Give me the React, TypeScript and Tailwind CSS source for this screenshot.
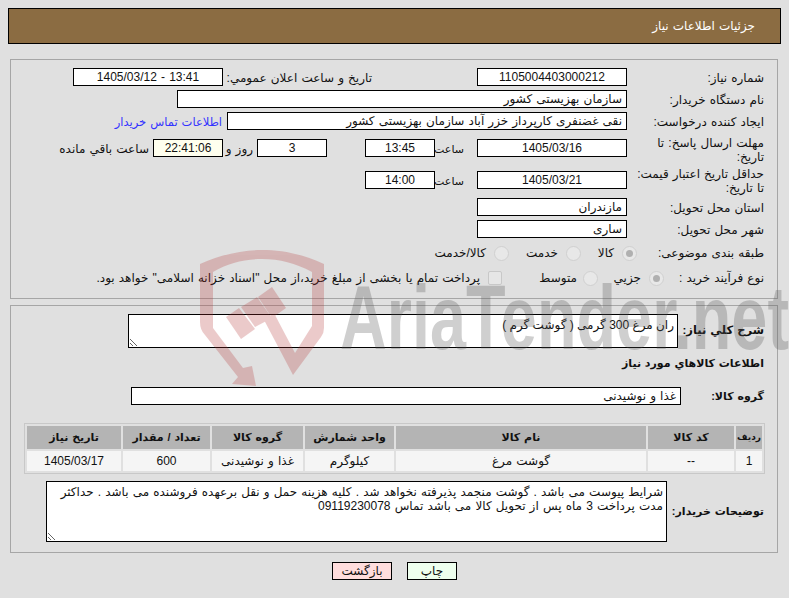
/**
 * Need details page
 */

import React from 'react';

const Field: React.FC<{ className?: string; children?: React.ReactNode }> = ({ className = '', children }) => (
  <div className={`h-[18px] border border-black bg-white leading-[17px] whitespace-nowrap overflow-hidden ${className}`}>
    {children}
  </div>
);

const Radio: React.FC<{ checked?: boolean; className?: string }> = ({ checked, className = '' }) => (
  <span className={`w-[15px] h-[15px] shrink-0 rounded-full border border-[#d0d0d0] bg-[#e8e8e8] flex items-center justify-center ${className}`}>
    {checked && <span className="w-[7px] h-[7px] rounded-full bg-[#b0b0b0]" />}
  </span>
);

const Watermark: React.FC = () => (
  <svg dir="ltr" className="absolute left-0 top-0 pointer-events-none" width="789" height="598" viewBox="0 0 789 598">
    <g fill="#b43232" opacity="0.25">
      <path d="M200 264 C225 253 245 250 262 250 C280 250 300 253 324 264 L324 328 Q324 333 321 337 L293 375 L263 318 L275 315 L295 353 L312 326 L312 272 C295 263 280 259 262 259 C245 259 228 263 213 272 L213 328 L243 368 L252 366 L256 386 L232 384 L238 377 L205 335 Q200 330 200 322 Z" />
      <polygon points="226,317 239,308 255,329 241,339" />
      <polygon points="241,307 257,297 272,318 255,327" />
      <polygon points="258,297 272,287 286,308 272,318" />
    </g>
    <text
      x="340"
      y="349"
      direction="ltr"
      fontFamily="'Liberation Sans', sans-serif"
      fontWeight="700"
      fontSize="90"
      fill="#555555"
      opacity="0.28"
      textLength="449"
      lengthAdjust="spacingAndGlyphs"
    >
      AriaTender.net
    </text>
  </svg>
);

const headers = [
  { title: 'ردیف', width: 'w-[26px]' },
  { title: 'کد کالا', width: 'w-[86px]' },
  { title: 'نام کالا', width: 'w-[250px]' },
  { title: 'واحد شمارش', width: 'w-[89px]' },
  { title: 'گروه کالا', width: 'w-[91px]' },
  { title: 'تعداد / مقدار', width: 'w-[87px]' },
  { title: 'تاریخ نیاز', width: 'w-[94px]' },
];

const row = ['1', '--', 'گوشت مرغ', 'کیلوگرم', 'غذا و نوشیدنی', '600', '1405/03/17'];

export default function App() {
  return (
    <div
      dir="rtl"
      className="relative w-[789px] h-[598px] overflow-hidden bg-[#e0e0e0] text-[12px] text-[#111] [word-spacing:0.8px] font-['Liberation_Sans','DejaVu_Sans',sans-serif]"
    >
      <div className="pt-2 px-2">
        {/* Page header */}
        <div className="h-9 border border-black bg-[#8b6c42] pr-[25px] text-white leading-[35px]">
          جزئیات اطلاعات نیاز
        </div>
      </div>

      {/* Main fields */}
      <div className="ml-[10px] mr-[11px] mt-[15px] h-[240px] border border-[#a6a6a6] pt-2 pr-[13px]">
        <div className="flex h-[18px]">
          <div className="w-[137px] leading-[20px]">شماره نیاز:</div>
          <Field className="w-[150px] text-center">1105004403000212</Field>
          <div className="w-[105px]" />
          <div className="w-[149px] leading-[20px]">تاریخ و ساعت اعلان عمومي:</div>
          <Field className="w-[150px] text-center"><span dir="ltr">1405/03/12 - 13:41</span></Field>
        </div>

        <div className="flex h-[18px] mt-1">
          <div className="w-[137px] leading-[20px]">نام دستگاه خریدار:</div>
          <Field className="w-[450px] px-1">سازمان بهزیستی کشور</Field>
        </div>

        <div className="flex h-[18px] mt-1">
          <div className="w-[137px] leading-[20px]">ایجاد کننده درخواست:</div>
          <Field className="w-[400px] px-1">نقی غضنفری کارپرداز خزر آباد سازمان بهزیستی کشور</Field>
          <a className="mr-[5px] leading-[20px] text-[11.5px] text-[#3333ff]">اطلاعات تماس خریدار</a>
        </div>

        <div className="flex h-[30px] mt-1.5">
          <div className="w-[137px] leading-[14px]">مهلت ارسال پاسخ: تا<br />تاریخ:</div>
          <div className="flex items-start pt-[3px]">
            <Field className="w-[150px] text-center">1405/03/16</Field>
            <div className="w-[42px] pr-[13px] text-[11px] leading-[20px] whitespace-nowrap">ساعت</div>
            <Field className="w-[70px] text-center">13:45</Field>
            <div className="w-[38px]" />
            <Field className="w-[70px] text-center">3</Field>
            <div className="w-[34px] pr-1 leading-[20px] whitespace-nowrap">روز و</div>
            <Field className="w-[70px] text-center !bg-[#ffffee]">22:41:06</Field>
            <div className="pr-1 leading-[20px] whitespace-nowrap">ساعت باقي مانده</div>
          </div>
        </div>

        <div className="flex h-[30px] mt-px">
          <div className="w-[137px] leading-[14px]">حداقل تاریخ اعتبار قیمت:<br />تا تاریخ:</div>
          <div className="flex items-start pt-1">
            <Field className="w-[150px] text-center">1405/03/21</Field>
            <div className="w-[42px] pr-[13px] text-[11px] leading-[20px] whitespace-nowrap">ساعت</div>
            <Field className="w-[70px] text-center">14:00</Field>
          </div>
        </div>

        <div className="flex h-[18px] mt-px">
          <div className="w-[137px] leading-[20px]">استان محل تحویل:</div>
          <Field className="w-[150px] px-1">مازندران</Field>
        </div>

        <div className="flex h-[18px] mt-1">
          <div className="w-[137px] leading-[20px]">شهر محل تحویل:</div>
          <Field className="w-[150px] px-1">ساری</Field>
        </div>

        <div className="flex items-center h-[18px] mt-[6px]">
          <div className="w-[127px] leading-[18px]">طبقه بندی موضوعی:</div>
          <Radio checked />
          <div className="w-[26px] pr-2">کالا</div>
          <div className="w-[15px]" />
          <Radio />
          <div className="w-[57px] pr-2">خدمت</div>
          <Radio />
          <div className="pr-2">کالا/خدمت</div>
        </div>

        <div className="flex items-center h-[18px] mt-[7px]">
          <div className="w-[100px] leading-[18px]">نوع فرآیند خرید :</div>
          <Radio checked />
          <div className="w-[51px] pr-2">جزیي</div>
          <Radio />
          <div className="w-[81px] pr-[6px]">متوسط</div>
          <span className="w-[14px] h-[14px] shrink-0 rounded-[2px] border border-[#c8c8c8] bg-[#e6e6e6]" />
          <div className="pr-2 whitespace-nowrap">پرداخت تمام یا بخشی از مبلغ خرید،از محل "اسناد خزانه اسلامی" خواهد بود.</div>
        </div>
      </div>

      {/* Goods details */}
      <div className="ml-[10px] mr-[11px] mt-[6px] h-[248px] border border-[#a6a6a6] pt-2 pr-[13px]">
        <div className="flex items-center h-[34px]">
          <div className="w-[86px] font-bold text-[11.5px]">شرح کلي نياز:</div>
          <textarea
            readOnly
            value="ران مرغ 300 گرمی ( گوشت گرم )"
            className="w-[550px] h-[34px] border border-black bg-white px-[3px] pt-[2px] leading-[16px] text-[12px] block"
          />
        </div>

        <div className="mt-[7px] h-4 leading-4 font-bold text-[11px]">اطلاعات کالاهاي مورد نياز</div>

        <div className="flex items-center mt-[16px] h-[18px]">
          <div className="w-[83px] font-bold text-[11px]">گروه کالا:</div>
          <Field className="w-[550px] px-1">غذا و نوشیدنی</Field>
        </div>

        {/* Items table */}
        <div className="mt-[18px] -mr-px w-[741px] border border-[#c8c8c8] p-[2px]">
          <div className="flex gap-[2px]">
            {headers.map((h, i) => (
              <div
                key={h.title}
                className={`${h.width} h-[23px] bg-[#b4b4b4] text-center font-bold leading-[23px] whitespace-nowrap ${i === 0 ? 'text-[9px]' : 'text-[11px]'}`}
              >
                {h.title}
              </div>
            ))}
          </div>
          <div className="flex gap-[2px] mt-[2px]">
            {row.map((cell, i) => (
              <div key={i} className={`${headers[i].width} h-[20px] bg-[#f5f5f5] text-center leading-[21px] whitespace-nowrap`}>
                {cell}
              </div>
            ))}
          </div>
        </div>

        <div className="flex items-center mt-[7px] h-[61px]">
          <div className="w-[97px] font-bold text-[11px] whitespace-nowrap">توضیحات خریدار:</div>
          <textarea
            readOnly
            value="شرایط پیوست می باشد . گوشت منجمد پذیرفته نخواهد شد . کلیه هزینه حمل و نقل برعهده فروشنده می باشد . حداکثر مدت پرداخت 3 ماه پس از تحویل کالا می باشد تماس 09119230078"
            className="w-[621px] h-[61px] border border-black bg-white pr-[3px] pl-[4px] pt-[3px] leading-[14px] text-[12px] [word-spacing:0.8px] block"
          />
        </div>
      </div>

      {/* Actions */}
      <div className="flex justify-center gap-[15px] mt-[9px]">
        <button className="w-[50px] h-[18px] border border-black bg-[#eeffee] leading-[16px]">چاپ</button>
        <button className="w-[60px] h-[18px] border border-black bg-[#ffdddd] leading-[16px]">بازگشت</button>
      </div>

      <Watermark />
    </div>
  );
}
